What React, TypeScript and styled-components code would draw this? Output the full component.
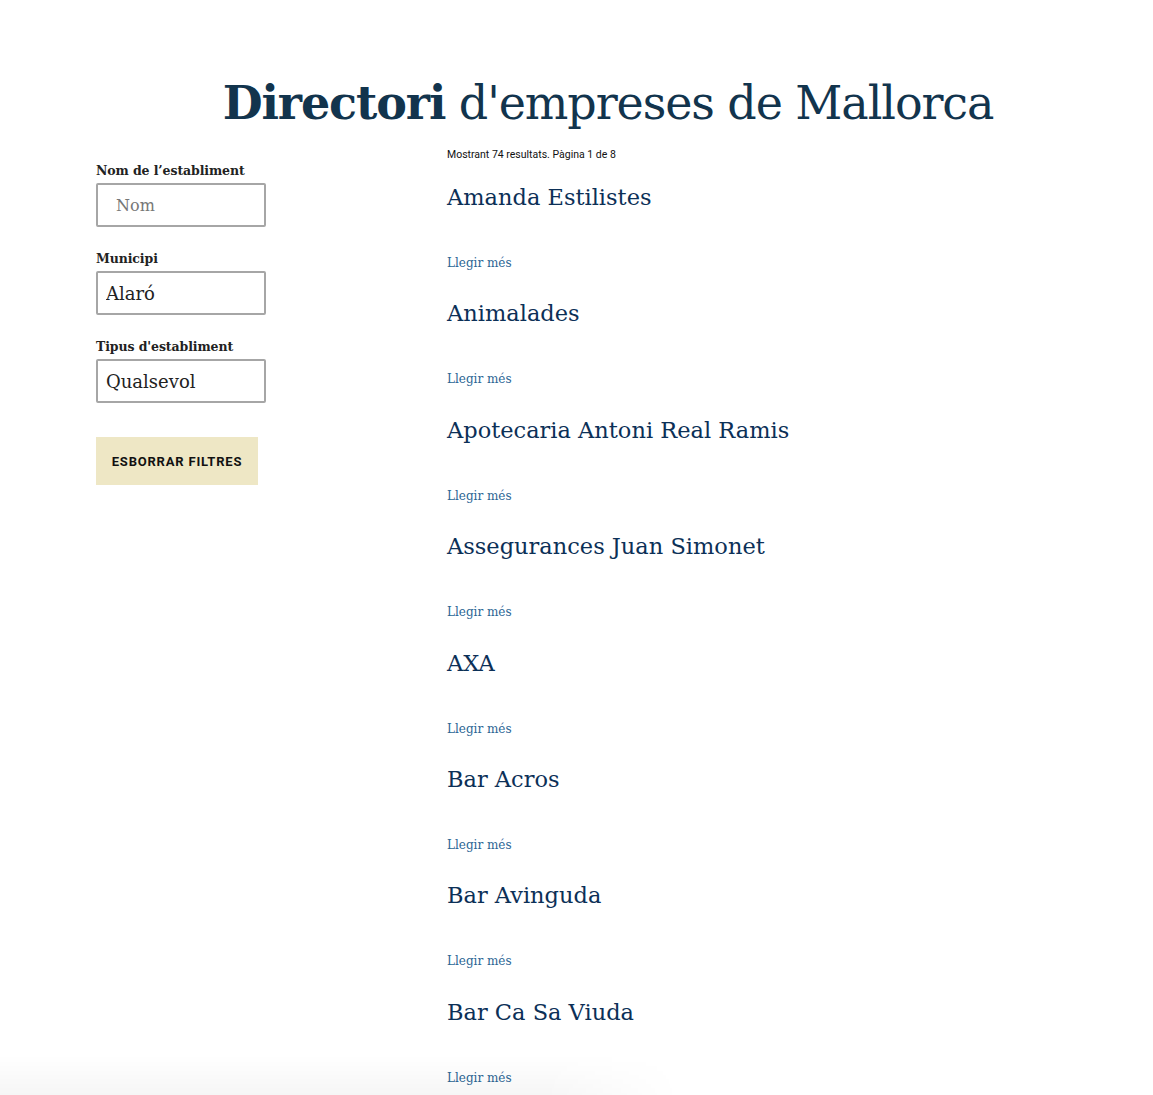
import React from "react";
import styled, { createGlobalStyle } from "styled-components";

const GlobalStyle = createGlobalStyle`
  html, body { margin: 0; padding: 0; background: #fff; }
  body { overflow: hidden; font-family: "DejaVu Serif", serif; }
  * { box-sizing: border-box; }
`;

const Page = styled.div`
  width: 1153px;
  height: 1095px;
  overflow: hidden;
  position: relative;
  padding: 71px 0 0 96px;
`;

const Container = styled.div`
  width: 1024px;
`;

const PageTitle = styled.h1`
  margin: 0 0 13px;
  text-align: center;
  font-family: "DejaVu Serif", serif;
  font-weight: 300;
  font-size: 46px;
  line-height: 64px;
  color: #12344d;
  letter-spacing: -1.1px;
  & strong { font-weight: 700; }
`;

const Layout = styled.div`
  display: grid;
  grid-template-columns: 351px 1fr;
`;

const Sidebar = styled.form`
  padding-top: 14px;
  display: flex;
  flex-direction: column;
  align-items: flex-start;
`;

const Field = styled.div`
  display: flex;
  flex-direction: column;
  gap: 3px;
  margin-bottom: 23px;
`;

const Label = styled.label`
  font-family: "DejaVu Serif", serif;
  font-weight: 700;
  font-size: 12.5px;
  line-height: 18px;
  letter-spacing: -0.1px;
  color: #222;
`;

const TextInput = styled.input`
  width: 170px;
  height: 44px;
  border: 2px solid #a6a6a6;
  border-radius: 2px;
  padding: 0 0 0 18px;
  font-family: "DejaVu Serif", serif;
  font-size: 16px;
  color: #222;
  outline: none;
  &::placeholder { color: #777; }
`;

const Select = styled.select`
  appearance: none;
  -webkit-appearance: none;
  width: 170px;
  height: 44px;
  border: 2px solid #a6a6a6;
  border-radius: 2px;
  padding: 0 0 0 8px;
  background: #fff;
  font-family: "DejaVu Serif", serif;
  font-size: 18px;
  color: #222;
  outline: none;
`;

const ClearButton = styled.button`
  margin-top: 11px;
  width: 162px;
  height: 48px;
  border: none;
  background: #eee7c5;
  font-family: Roboto, "Liberation Sans", sans-serif;
  font-weight: 700;
  font-size: 13px;
  letter-spacing: 0.8px;
  color: #111;
  cursor: pointer;
`;

const Results = styled.div`
  display: flex;
  flex-direction: column;
`;

const Meta = styled.p`
  margin: 0 0 20px;
  font-family: Roboto, "Liberation Sans", sans-serif;
  font-size: 10.5px;
  line-height: 14px;
  color: #111;
`;

const Item = styled.article`
  height: 116.4px;
  flex-shrink: 0;
`;

const ItemTitle = styled.h2`
  margin: 0 0 41px;
  font-family: "DejaVu Serif", serif;
  font-weight: 400;
  font-size: 22.5px;
  line-height: 30px;
  color: #0c3057;
`;

const ReadMore = styled.a`
  display: block;
  font-family: "DejaVu Serif", serif;
  font-size: 12px;
  line-height: 20px;
  color: #2b6594;
  text-decoration: none;
`;

const BottomShade = styled.div`
  position: absolute;
  left: 0;
  bottom: 0;
  width: 680px;
  height: 40px;
  pointer-events: none;
  background: linear-gradient(to bottom, rgba(0,0,0,0), rgba(0,0,0,0.035));
  -webkit-mask-image: linear-gradient(to right, #000 80%, transparent);
  mask-image: linear-gradient(to right, #000 80%, transparent);
`;

const companies = [
  "Amanda Estilistes",
  "Animalades",
  "Apotecaria Antoni Real Ramis",
  "Assegurances Juan Simonet",
  "AXA",
  "Bar Acros",
  "Bar Avinguda",
  "Bar Ca Sa Viuda",
];

export default function App() {
  return (
    <>
      <GlobalStyle />
      <Page>
        <Container>
          <PageTitle>
            <strong>Directori</strong> d'empreses de Mallorca
          </PageTitle>
          <Layout>
            <Sidebar onSubmit={(e) => e.preventDefault()}>
              <Field>
                <Label htmlFor="nom">Nom de l’establiment</Label>
                <TextInput id="nom" placeholder="Nom" />
              </Field>
              <Field>
                <Label htmlFor="municipi">Municipi</Label>
                <Select id="municipi" defaultValue="alaro">
                  <option value="alaro">Alaró</option>
                </Select>
              </Field>
              <Field>
                <Label htmlFor="tipus">Tipus d'establiment</Label>
                <Select id="tipus" defaultValue="any">
                  <option value="any">Qualsevol</option>
                </Select>
              </Field>
              <ClearButton type="button">ESBORRAR FILTRES</ClearButton>
            </Sidebar>
            <Results>
              <Meta>Mostrant 74 resultats. Pàgina 1 de 8</Meta>
              {companies.map((c) => (
                <Item key={c}>
                  <ItemTitle>{c}</ItemTitle>
                  <ReadMore href="#">Llegir més</ReadMore>
                </Item>
              ))}
            </Results>
          </Layout>
        </Container>
        <BottomShade />
      </Page>
    </>
  );
}
